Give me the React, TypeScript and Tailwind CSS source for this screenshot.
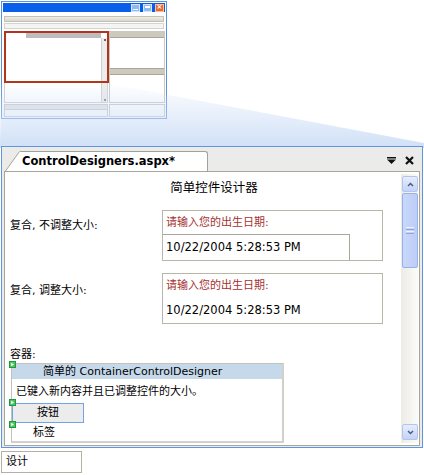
import React from 'react';

// Small green "glyph" markers the designer shows next to child controls
function Marker({ className }: { className: string }) {
  return (
    <svg className={`absolute ${className}`} width="7" height="7" viewBox="0 0 7 7">
      <rect x="0.5" y="0.5" width="6" height="6" fill="#52c463" stroke="#1f9a3b" />
      <path d="M2.2 1.7 L5 3.5 L2.2 5.3 Z" fill="#ffffff" />
    </svg>
  );
}

function ScrollButton({ up }: { up?: boolean }) {
  return (
    <div className="h-[16px] rounded-[2px] border border-[#b3c5ee] bg-linear-to-b from-[#e6edfd] to-[#c4d3f6] flex items-center justify-center">
      <svg width="7" height="5" viewBox="0 0 7 5">
        <path
          d={up ? 'M1 4 L3.5 1.5 L6 4' : 'M1 1 L3.5 3.5 L6 1'}
          stroke="#4a5d80"
          strokeWidth="1.5"
          fill="none"
        />
      </svg>
    </div>
  );
}

// ── Thumbnail of the whole IDE window ────────────────────────────────────────
function Thumbnail() {
  return (
    <div className="w-[166px] h-[118px] border border-[#5b8fe0] bg-white p-[1px] flex flex-col">
      <div className="h-[9px] bg-[#0a5fe8] flex justify-end items-center gap-[3px] pr-[1px]">
        <div className="w-[9px] h-[8px] bg-[#8dbaf3] border border-[#d6e6fb] flex items-end justify-center pb-[1px]">
          <div className="w-[5px] h-[1px] bg-white" />
        </div>
        <div className="w-[9px] h-[8px] bg-[#8dbaf3] border border-[#d6e6fb] p-[1px]">
          <div className="w-full h-full border-t-2 border-white" />
        </div>
        <div className="w-[9px] h-[8px] bg-[#ec6a2c] border border-[#f7c0a0] flex items-center justify-center text-white text-[7px] leading-none font-bold font-['DejaVu_Sans',sans-serif]">
          ×
        </div>
      </div>
      <div className="mt-[4px] mx-[1px] h-[6px] border border-[#c4c1b7] bg-linear-to-b from-[#efeee9] to-[#d9d6cc]" />
      <div className="mt-[1px] mx-[1px] h-[6px] border border-[#d4d4d0] bg-[#f4f4f2]" />
      <div className="mt-[2px] flex gap-[1px] pl-[1px]">
        <div className="relative w-[104px] h-[72px] border border-[#d0d0d0] flex flex-col">
          <div className="flex h-[6px]">
            <div className="w-[21px]" />
            <div className="flex-1 mr-[6px] bg-[#bdbdbd]" />
          </div>
          <div className="flex flex-1">
            <div className="flex-1" />
            <div className="w-[6px] border-l border-[#d0d0d0] bg-[#ececec] flex flex-col justify-between items-center py-[1px]">
              <div className="w-[2px] h-[2px] bg-[#666]" />
              <div className="w-[2px] h-[2px] bg-[#888]" />
            </div>
          </div>
          <div className="absolute left-[-1px] top-[-1px] w-[105px] h-[52px] border-2 border-[#b2341b]" />
        </div>
        <div className="w-[56px] h-[72px] border border-[#c9c9c4] flex flex-col">
          <div className="h-[6px] bg-[#cdcabd] border-b border-[#a9a698]" />
          <div className="h-[30px]" />
          <div className="h-[7px] bg-[#cdcabd] border-y border-[#a9a698]" />
          <div className="flex-1" />
        </div>
      </div>
      <div className="mt-[1px] flex gap-[1px] pl-[1px] flex-1">
        <div className="w-[104px] flex flex-col">
          <div className="h-[6px] border border-[#c8c8c8] bg-[#e4e4e4]" />
          <div className="flex-1 border border-t-0 border-[#c8c8c8]" />
        </div>
        <div className="w-[56px] border border-[#c8c8c8]" />
      </div>
    </div>
  );
}

// ── Callout that joins the red box to the enlarged panel ─────────────────────
function Callout() {
  return (
    <svg className="absolute inset-0 pointer-events-none" width="424" height="475" viewBox="0 0 424 475">
      <defs>
        <linearGradient id="co" x1="0" y1="82" x2="0" y2="148" gradientUnits="userSpaceOnUse">
          <stop offset="0" stopColor="#d0e0f7" stopOpacity="0" />
          <stop offset="1" stopColor="#d0e0f7" stopOpacity="1" />
        </linearGradient>
      </defs>
      <polygon points="1,82 100,82 424,143 424,148 0,148" fill="url(#co)" />
    </svg>
  );
}

export default function App() {
  const cjk = "font-['DejaVu_Sans','Noto_Sans_CJK_SC',sans-serif]";
  return (
    <div className={`relative w-[424px] h-[475px] bg-white overflow-hidden text-black ${cjk}`}>
      <div className="pl-[1px] pt-[1px]">
        <Thumbnail />
      </div>
      <Callout />

      {/* Enlarged document window */}
      <div className="relative ml-[1px] mt-[27px] w-[422px] h-[302px] border border-[#5d94e6] bg-[#ebebea] flex flex-col">
        <div className="h-[24px] flex items-end pl-[3px] pr-[8px]">
          <div className="flex h-[20px]">
            <svg width="15" height="20" viewBox="0 0 15 20" className="block">
              <polygon points="0,20 14.5,0.5 15,0.5 15,20" fill="#ffffff" />
              <line x1="0.5" y1="20" x2="14.5" y2="0.5" stroke="#a3a296" />
            </svg>
            <div className="w-[188px] bg-white border-t border-r border-[#a3a296] rounded-tr-[3px] pl-[2px] pt-[2px] text-[11.5px] leading-[14px] font-bold font-['DejaVu_Sans',sans-serif]">
              ControlDesigners.aspx*
            </div>
          </div>
          <div className="flex-1" />
          <div className="flex items-center gap-[9px] self-center pt-[2px]">
            <svg width="9" height="7" viewBox="0 0 9 7">
              <rect x="0" y="0" width="9" height="1.5" fill="#111" />
              <polygon points="0,2.5 9,2.5 4.5,7" fill="#111" />
            </svg>
            <svg width="9" height="9" viewBox="0 0 9 9">
              <path d="M1 1 L8 8 M8 1 L1 8" stroke="#111" strokeWidth="2.2" />
            </svg>
          </div>
        </div>

        <div className="mx-[2px] h-[275px] border border-[#a7a69a] bg-white flex">
          <div className="flex-1 flex flex-col">
            <div className="pt-[8px] pl-[22px] text-center text-[12.5px] leading-[16px]">简单控件设计器</div>

            <div className="mt-[14px] flex">
              <div className="w-[157px] pl-[5px] pt-[8px] text-[11px] leading-[16px]">复合, 不调整大小:</div>
              <div className="w-[221px] h-[51px] border border-[#b8b6a8] flex flex-col">
                <div className="pt-[4px] pl-[3px] text-[11px] leading-[16px] text-[#a53131]">请输入您的出生日期:</div>
                <div className="mt-[3px] w-[187px] h-[26px] border-t border-r border-[#a8a79b] flex items-center pl-[3px] text-[11.5px]">
                  10/22/2004 5:28:53 PM
                </div>
              </div>
            </div>

            <div className="mt-[12px] flex">
              <div className="w-[157px] pl-[5px] pt-[10px] text-[11px] leading-[16px]">复合, 调整大小:</div>
              <div className="w-[221px] h-[51px] border border-[#b8b6a8] flex flex-col pl-[3px]">
                <div className="pt-[4px] text-[11px] leading-[16px] text-[#a53131]">请输入您的出生日期:</div>
                <div className="mt-[8px] text-[11.5px] leading-[16px]">10/22/2004 5:28:53 PM</div>
              </div>
            </div>

            <div className="mt-[23px] pl-[5px] text-[11px] leading-[16px]">容器:</div>
            <div className="relative ml-[6px] w-[273px] h-[80px] border border-[#c4c2b8] border-r-2 border-b-2 border-r-[#d2d0c8] border-b-[#d2d0c8] flex flex-col">
              <div className="h-[15px] bg-[#c6d9eb] pl-[31px] text-[11px] leading-[15px]">简单的 ContainerControlDesigner</div>
              <div className="mt-[5px] pl-[4px] text-[11px] leading-[16px]">已键入新内容并且已调整控件的大小。</div>
              <div className="mt-[3px] w-[72px] h-[20px] border border-[#74a3e3] bg-[#ececec] flex items-center justify-center text-[11px]">
                按钮
              </div>
              <div className="mt-[2px] pl-[21px] text-[11px] leading-[16px]">标签</div>
              <Marker className="left-[-3px] top-[-3px]" />
              <Marker className="left-[-3px] top-[35px]" />
              <Marker className="left-[-3px] top-[57px]" />
            </div>
          </div>

          {/* vertical scrollbar */}
          <div className="w-[17px] mr-[1px] mt-[2px] mb-[2px] bg-linear-to-r from-[#ecebe4] to-[#fbfbf9] flex flex-col pl-[1px]">
            <div className="mt-[2px]">
              <ScrollButton up />
            </div>
            <div className="mt-[1px] h-[75px] rounded-[2px] border border-[#98b2e8] bg-linear-to-r from-[#c9d7fa] to-[#bccdf6] flex flex-col items-center justify-center gap-[1px]">
              <div className="w-[8px] h-[1px] bg-[#eef3fe]" />
              <div className="w-[8px] h-[1px] bg-[#8ea6dc]" />
              <div className="w-[8px] h-[1px] bg-[#eef3fe]" />
              <div className="w-[8px] h-[1px] bg-[#8ea6dc]" />
            </div>
            <div className="flex-1" />
            <div className="mb-[3px]">
              <ScrollButton />
            </div>
          </div>
        </div>
      </div>

      {/* view tab */}
      <div className="ml-[1px] mt-[3px] w-[81px] h-[22px] border border-[#b3b1a4] flex items-center pl-[4px] text-[11px]">
        设计
      </div>
    </div>
  );
}
